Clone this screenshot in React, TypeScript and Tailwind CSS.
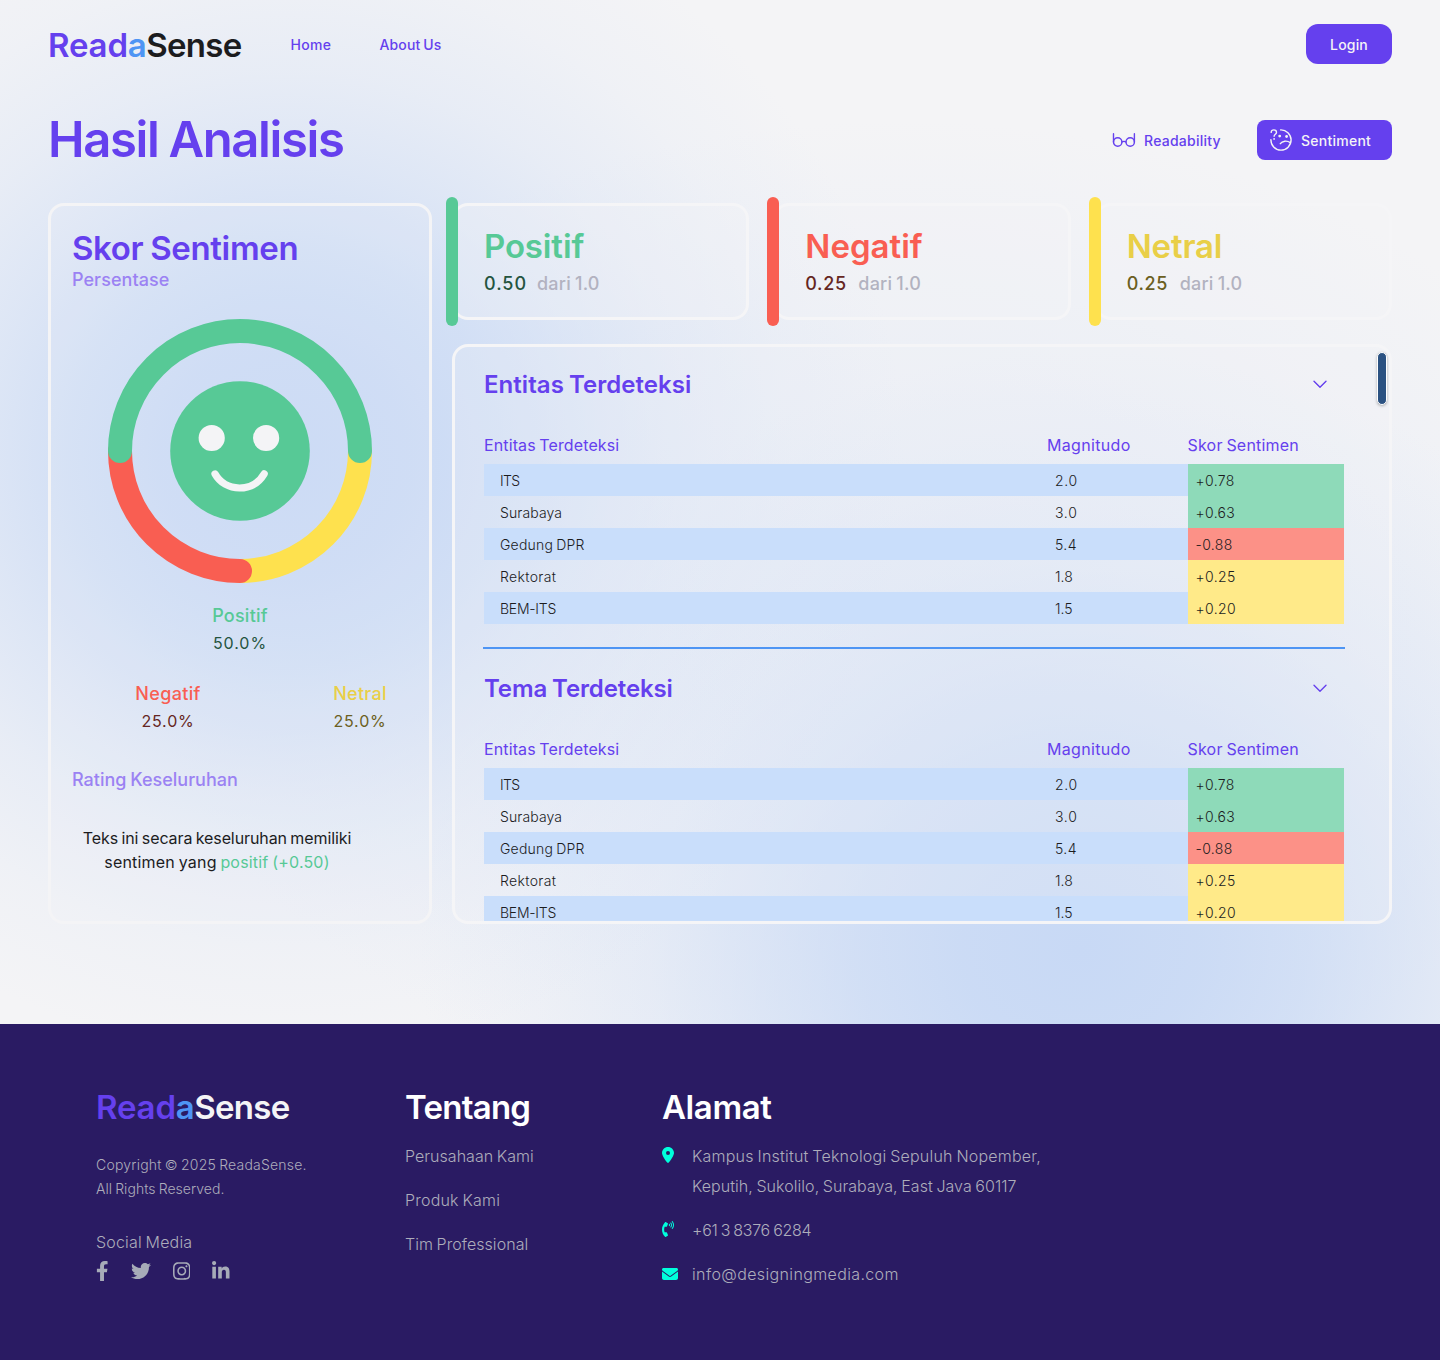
import type { ReactNode } from "react";
import { FaFacebookF, FaInstagram, FaLinkedinIn, FaPhoneVolume, FaTwitter } from "react-icons/fa";
import { FaEnvelope, FaLocationDot } from "react-icons/fa6";

type Tone = "positive" | "negative" | "neutral";

const cellTone: Record<Tone, string> = {
  positive: "bg-[#8edab9]",
  negative: "bg-[#fc9187]",
  neutral: "bg-[#ffea89]",
};

const entities: { name: string; nameClass: string; magnitude: string; magClass: string; score: string; tone: Tone }[] = [
  { name: "ITS", nameClass: "tracking-[-0.05em]", magnitude: "2.0", magClass: "tracking-[0.05em]", score: "+0.78", tone: "positive" },
  { name: "Surabaya", nameClass: "tracking-[0.008em]", magnitude: "3.0", magClass: "tracking-[0.05em]", score: "+0.63", tone: "positive" },
  { name: "Gedung DPR", nameClass: "tracking-[0.015em]", magnitude: "5.4", magClass: "tracking-[0.03em]", score: "-0.88", tone: "negative" },
  { name: "Rektorat", nameClass: "tracking-[0.025em]", magnitude: "1.8", magClass: "tracking-[0em]", score: "+0.25", tone: "neutral" },
  { name: "BEM-ITS", nameClass: "tracking-[-0.018em]", magnitude: "1.5", magClass: "tracking-[0em]", score: "+0.20", tone: "neutral" },
];

function Logo({ light = false }: { light?: boolean }) {
  return (
    <div className="text-[33px] leading-10 font-semibold">
      <span className="tracking-[-0.005em] text-[#6540ee]">Read</span>
      <span className="tracking-[-0.015em] text-[#4e95f4]">a</span>
      <span className={light ? "tracking-[-0.022em] text-[#f4f4f6]" : "tracking-[-0.022em] text-[#1c1c1e]"}>Sense</span>
    </div>
  );
}

function GlassesIcon() {
  return (
    <svg className="h-[16px] w-[24px]" viewBox="0 0 24 16" fill="none" stroke="currentColor" strokeWidth="1.4" strokeLinecap="round">
      <circle cx="5.7" cy="10" r="4.2" />
      <circle cx="18.2" cy="10" r="4.2" />
      <path d="M1.5 1.8V10M22.4 1.8V10M9.9 10c.8-.9 3.3-.9 4.1 0" />
    </svg>
  );
}

function ConfusedIcon() {
  return (
    <svg className="h-[24px] w-[24px]" viewBox="-1 -1 24 24" fill="none" stroke="currentColor" strokeWidth="1.4" strokeLinecap="round" strokeLinejoin="round">
      <path d="M10.6.9A10.1 10.1 0 1 1 .9 10.6" />
      <path d="M1.2 3.4C1.2 1.9 2.3.9 3.8.9S6.5 2 6.5 3.4C6.5 5.2 4.1 5.2 4.1 7.2" />
      <path d="M10.3 14.7c2-2.9 6.6-3.4 10-1.1" />
      <g fill="currentColor" stroke="none">
        <circle cx="4.1" cy="9.9" r="0.9" />
        <circle cx="9.7" cy="7.1" r="1.4" />
        <circle cx="16.6" cy="7.5" r="1.4" />
      </g>
    </svg>
  );
}

function SentimentRing() {
  return (
    <svg className="block h-[264px] w-[264px]" viewBox="0 0 264 264" fill="none">
      <g strokeWidth="24" strokeLinecap="round">
        <path d="M252 132A120 120 0 0 1 132 252" stroke="#fee14e" />
        <path d="M132 252A120 120 0 0 1 12 132" stroke="#f95e52" />
        <path d="M12 132A120 120 0 0 1 252 132" stroke="#57c996" />
      </g>
      <circle cx="132" cy="132" r="69.8" fill="#57c996" />
      <circle cx="103.7" cy="119" r="13.1" fill="#f4f4f6" />
      <circle cx="158.1" cy="119" r="13.1" fill="#f4f4f6" />
      <path d="M107 154.9C112 163.7 121 169 131.5 169S151 163.7 156.2 154.9" stroke="#f4f4f6" strokeWidth="7.2" strokeLinecap="round" />
    </svg>
  );
}

function Share({ label, value, labelClass, valueClass }: { label: string; value: string; labelClass: string; valueClass: string }) {
  return (
    <div className="flex flex-col items-center gap-[3px]">
      <div className={`text-[18px] leading-6 font-medium ${labelClass}`}>{label}</div>
      <div className={`text-[16px] leading-6 ${valueClass}`}>{value}</div>
    </div>
  );
}

function ScoreCard({ label, value, bar, labelClass, valueClass }: { label: string; value: string; bar: string; labelClass: string; valueClass: string }) {
  return (
    <div className="relative h-[117px] rounded-2xl border-[3px] border-[#f5f5f7] bg-[#f4f4f6]/35 pt-[20px] pl-[29px]">
      <span className={`absolute -top-[9px] -left-[9px] h-[129px] w-3 rounded-full ${bar}`} />
      <div className={`text-[33px] leading-10 font-semibold ${labelClass}`}>{label}</div>
      <div className="mt-[6px] flex text-[18px] leading-6 font-medium">
        <span className={`w-[53px] ${valueClass}`}>{value}</span>
        <span className="tracking-[0.012em] text-[#b2b2c0]">dari 1.0</span>
      </div>
    </div>
  );
}

function EntitySection({ title, titleClass }: { title: string; titleClass: string }) {
  return (
    <section className="h-[300px] shrink-0">
      <div className="flex items-center justify-between pt-[22px] pr-[17px]">
        <h2 className={`text-[24px] leading-8 font-semibold text-[#6540ee] ${titleClass}`}>{title}</h2>
        <svg className="mb-[2px] h-[9px] w-[14px]" viewBox="0 0 14 9" fill="none" stroke="#6540ee" strokeWidth="1.4" strokeLinecap="round" strokeLinejoin="round">
          <path d="M1 1.2 7 7.2l6-6" />
        </svg>
      </div>
      <div className="mt-[28px] grid grid-cols-[563px_140.5px_156.5px] pb-[3px] text-[16px] leading-8 text-[#6540ee]">
        <span className="tracking-[0.007em]">Entitas Terdeteksi</span>
        <span className="tracking-[0.02em]">Magnitudo</span>
        <span className="tracking-[0.013em]">Skor Sentimen</span>
      </div>
      {entities.map((e, i) => (
        <div key={e.name} className={`grid h-8 grid-cols-[563px_140.5px_156.5px] text-[14px] leading-8 font-[350] text-[#1c1c1e] ${i % 2 === 0 ? "bg-[#c9defb]" : ""}`}>
          <span className={`pt-px pl-4 leading-[31px] ${e.nameClass}`}>{e.name}</span>
          <span className={`pt-px pl-2 leading-[31px] ${e.magClass}`}>{e.magnitude}</span>
          <span className={`pt-px pl-2 leading-[31px] tracking-[0.025em] ${cellTone[e.tone]}`}>{e.score}</span>
        </div>
      ))}
    </section>
  );
}

function Contact({ icon, children }: { icon: ReactNode; children: ReactNode }) {
  return (
    <div className="flex">
      <div className="w-[30px] shrink-0 pt-[6px] text-[#00ffdc]">{icon}</div>
      <div>{children}</div>
    </div>
  );
}

export default function App() {
  return (
    <div className="flex h-[1360px] w-[1440px] flex-col overflow-hidden bg-[#f4f4f6] font-['Inter',sans-serif] [word-spacing:-0.06em]">
      <div className="h-[1024px] bg-[radial-gradient(ellipse_620px_600px_at_285px_460px,#c8d9f5_0%,#c8d9f5ea_20%,#c8d9f5bf_35%,#c8d9f580_50%,#c8d9f547_65%,#c8d9f51a_82%,#c8d9f500_100%),radial-gradient(ellipse_660px_600px_at_1080px_950px,#c8d9f5_0%,#c8d9f5ea_18%,#c8d9f5bf_34%,#c8d9f580_50%,#c8d9f547_65%,#c8d9f520_82%,#c8d9f500_100%),radial-gradient(ellipse_760px_500px_at_900px_620px,#d5e1f570_0%,#d5e1f540_50%,#d5e1f500_100%)]">
        <header className="flex h-[88px] items-center px-12">
          <div className="pt-[2px]">
            <Logo />
          </div>
          <nav className="ml-[49px] flex flex-1 gap-[48px] text-[14px] font-medium text-[#6540ee]">
            <a className="w-[41px] tracking-[0.02em]">Home</a>
            <a className="tracking-[0.01em]">About Us</a>
          </nav>
          <button className="h-10 w-[86px] rounded-xl bg-[#6540ee] text-[14px] font-medium tracking-[0.012em] text-[#f4f4f6]">Login</button>
        </header>

        <div className="flex items-center justify-between px-12 pt-[22px]">
          <h1 className="text-[49px] leading-[60px] font-semibold tracking-[-0.028em] text-[#6540ee]">Hasil Analisis</h1>
          <div className="flex gap-4 text-[14px] font-medium">
            <button className="flex h-10 w-[129px] items-center gap-2 tracking-[0.018em] text-[#6540ee]">
              <GlassesIcon />
              Readability
            </button>
            <button className="flex h-10 w-[135px] items-center gap-2 rounded-lg bg-[#6540ee] pl-3 tracking-[0.018em] text-[#f4f4f6]">
              <ConfusedIcon />
              Sentiment
            </button>
          </div>
        </div>

        <main className="mt-[33px] flex gap-5 px-12">
          <aside className="flex h-[721px] w-[384px] flex-col rounded-2xl border-[3px] border-[#f4f4f6] bg-[#f4f4f6]/10 px-[21px] pt-[22px]">
            <h2 className="text-[33px] leading-10 font-semibold tracking-[-0.011em] text-[#6540ee]">Skor Sentimen</h2>
            <div className="text-[18px] leading-6 font-medium tracking-[0.003em] text-[#9b82f3]">Persentase</div>
            <div className="mt-[27px] flex justify-center">
              <SentimentRing />
            </div>
            <div className="mt-[21px]">
              <Share label="Positif" value="50.0%" labelClass="tracking-[0.013em] text-[#57c996]" valueClass="tracking-[0.06em] text-[#24543f]" />
            </div>
            <div className="mt-[27px] grid w-[384px] grid-cols-2">
              <Share label="Negatif" value="25.0%" labelClass="tracking-[0.018em] text-[#f95e52]" valueClass="tracking-[0.05em] text-[#652622]" />
              <Share label="Netral" value="25.0%" labelClass="tracking-[0.015em] text-[#e9cf47]" valueClass="tracking-[0.05em] text-[#6b5f22]" />
            </div>
            <div className="mt-[35px] text-[18px] leading-6 font-medium text-[#9b82f3]">Rating Keseluruhan</div>
            <p className="mt-[34px] w-[290px] text-center text-[16px] leading-6 text-[#1c1c1e]">
              <span className="tracking-[-0.006em]">Teks ini secara keseluruhan memiliki</span>
              <br />
              <span className="tracking-[0.012em]">
                sentimen yang <span className="text-[#57c996]">positif (+0.50)</span>
              </span>
            </p>
          </aside>

          <div className="flex flex-1 flex-col gap-6">
            <div className="grid grid-cols-3 gap-6">
              <ScoreCard label="Positif" value="0.50" bar="bg-[#57c996]" labelClass="tracking-[-0.004em] text-[#57c996]" valueClass="tracking-[0.055em] text-[#24543f]" />
              <ScoreCard label="Negatif" value="0.25" bar="bg-[#f95e52]" labelClass="tracking-[0em] text-[#f95e52]" valueClass="tracking-[0.035em] text-[#652622]" />
              <ScoreCard label="Netral" value="0.25" bar="bg-[#fee14e]" labelClass="tracking-[-0.005em] text-[#e9cf47]" valueClass="tracking-[0.035em] text-[#6b5f22]" />
            </div>

            <div className="relative h-[580px] overflow-hidden rounded-2xl border-[3px] border-[#f5f5f7] bg-[#f4f4f6]/25">
              <div className="ml-[29px] flex w-[860px] flex-col">
                <EntitySection title="Entitas Terdeteksi" titleClass="tracking-[0.002em]" />
                <div className="-mx-px mb-[2px] h-[2px] shrink-0 bg-[#4e95f4]" />
                <EntitySection title="Tema Terdeteksi" titleClass="tracking-[-0.005em]" />
              </div>
              <div className="absolute top-[5px] right-[2px] h-[53px] w-[10px] rounded-full border border-white bg-[#2c5282] shadow-[0_1px_3px_rgba(0,0,0,0.3)]" />
            </div>
          </div>
        </main>
      </div>

      <footer className="flex h-[336px] bg-[#2a1b63] px-24 pt-[63px] text-[16px] font-light text-[#adadbb]">
        <div className="w-[309px]">
          <Logo light />
          <p className="mt-[26px] text-[14px] leading-6">
            <span className="tracking-[0.015em]">Copyright © 2025 ReadaSense.</span>
            <br />
            <span className="tracking-[0.004em]">All Rights Reserved.</span>
          </p>
          <div className="mt-[29px] leading-6 tracking-[0.011em]">Social Media</div>
          <div className="mt-[7px] flex items-center gap-[22px] text-[#a7abb8]">
            <FaFacebookF className="h-5 w-[12.5px]" />
            <FaTwitter className="h-5 w-5" />
            <FaInstagram className="h-5 w-[17.5px]" />
            <FaLinkedinIn className="h-5 w-[17.5px]" />
          </div>
        </div>
        <div className="w-[257px]">
          <h3 className="text-[33px] leading-10 font-semibold tracking-[-0.023em] text-white">Tentang</h3>
          <div className="mt-[14px] flex flex-col gap-[14px] leading-[30px]">
            <a className="tracking-[0.002em]">Perusahaan Kami</a>
            <a className="tracking-[0.013em]">Produk Kami</a>
            <a className="tracking-[0.003em]">Tim Professional</a>
          </div>
        </div>
        <div>
          <h3 className="text-[33px] leading-10 font-semibold tracking-[-0.012em] text-white">Alamat</h3>
          <div className="mt-[14px] flex flex-col gap-[14px] leading-[30px] whitespace-nowrap">
            <Contact icon={<FaLocationDot className="h-4 w-3" />}>
              <span className="tracking-[0.0135em]">Kampus Institut Teknologi Sepuluh Nopember,</span>
              <br />
              <span className="tracking-[0.003em]">Keputih, Sukolilo, Surabaya, East Java 60117</span>
            </Contact>
            <Contact icon={<FaPhoneVolume className="h-4 w-3" />}>
              <span className="tracking-[-0.019em]">+61 3 8376 6284</span>
            </Contact>
            <Contact icon={<FaEnvelope className="mt-px h-4 w-4" />}>
              <span className="tracking-[0.023em]">info@designingmedia.com</span>
            </Contact>
          </div>
        </div>
      </footer>
    </div>
  );
}
